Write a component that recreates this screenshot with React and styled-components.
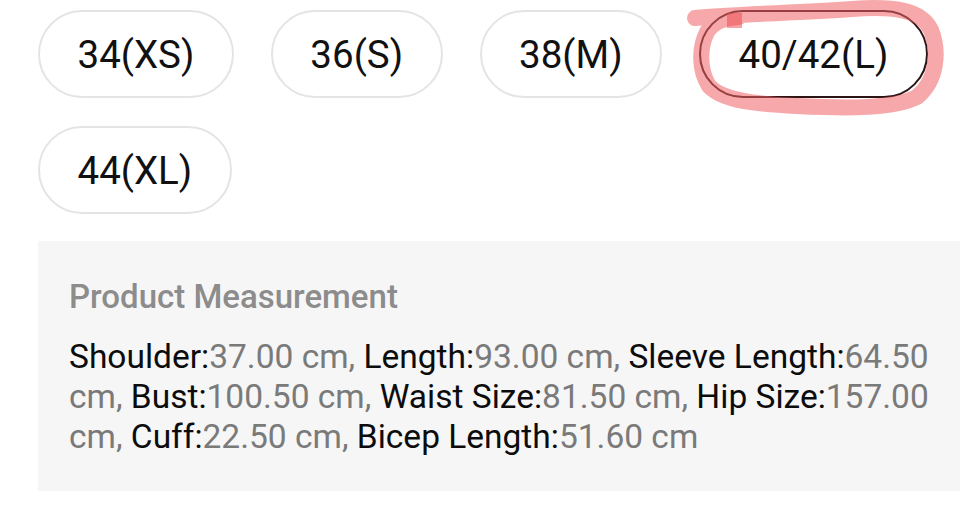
import React from 'react'
import styled, { createGlobalStyle } from 'styled-components'

const sizes = ['34(XS)', '36(S)', '38(M)', '40/42(L)', '44(XL)']
const selectedSize = '40/42(L)'

const measurements = [
	['Shoulder', '37.00 cm'],
	['Length', '93.00 cm'],
	['Sleeve Length', '64.50 cm'],
	['Bust', '100.50 cm'],
	['Waist Size', '81.50 cm'],
	['Hip Size', '157.00 cm'],
	['Cuff', '22.50 cm'],
	['Bicep Length', '51.60 cm'],
]

const GlobalStyle = createGlobalStyle`
	body {
		margin: 0;
		background: #ffffff;
		font-family: Roboto, "Noto Sans", Arial, sans-serif;
	}
`

export default function App() {
	return (
		<Page>
			<GlobalStyle />
			<SizeGrid>
				{sizes.map((s) => (
					<ChipWrap key={s}>
						<SizeChip selected={s === selectedSize}>{s}</SizeChip>
						{s === selectedSize && <Scribble />}
					</ChipWrap>
				))}
			</SizeGrid>
			<MeasureBox>
				<MeasureTitle>Product Measurement</MeasureTitle>
				<MeasureText>
					{measurements.map(([label, value], i) => (
						<React.Fragment key={label}>
							<Label>{label}:</Label>
							<Value>{value}{i < measurements.length - 1 ? ', ' : ''}</Value>
						</React.Fragment>
					))}
				</MeasureText>
			</MeasureBox>
		</Page>
	)
}

// hand drawn red loop round the picked size
const Scribble = () => (
	<ScribbleSvg viewBox="0 0 280 125" width="280" height="125">
		<path
			d="M18 18 C 60 14, 120 13, 175 9 C 215 6, 244 9, 254 30 C 262 50, 261 80, 240 97 C 215 110, 160 108, 120 106 C 80 104, 46 101, 32 86 C 22 70, 22 48, 30 32 C 36 22, 46 18, 62 17"
			fill="none"
			stroke="rgba(238, 96, 100, 0.55)"
			strokeWidth="16"
			strokeLinecap="round"
			strokeLinejoin="round"
		/>
		<rect x="50" y="13" width="15" height="15" fill="rgba(238, 70, 76, 0.5)" />
	</ScribbleSvg>
)

const Page = styled.div`
	width: 960px;
	height: 505px;
	overflow: hidden;
	padding: 10px 0 0 38px;
	box-sizing: border-box;
	background: #fff;
`

const SizeGrid = styled.div`
	display: flex;
	flex-wrap: wrap;
	column-gap: 37px;
	row-gap: 28px;
	width: 922px;
`

const ChipWrap = styled.div`
	position: relative;
`

const SizeChip = styled.div`
	height: 88px;
	box-sizing: border-box;
	padding: 0 37.5px;
	display: flex;
	align-items: center;
	border-radius: 44px;
	border: 2px solid ${(p) => (p.selected ? '#2b1414' : '#e4e4e4')};
	font-size: 38.5px;
	color: #111;
	background: #fff;
`

const ScribbleSvg = styled.svg`
	position: absolute;
	left: -22px;
	top: -10px;
	pointer-events: none;
`

const MeasureBox = styled.div`
	margin-top: 27px;
	background: #f6f6f6;
	padding: 36px 20px 33px 31px;
	height: 250px;
	box-sizing: border-box;
`

const MeasureTitle = styled.div`
	font-size: 33px;
	font-weight: 500;
	line-height: 40px;
	color: #8c8c8c;
	margin-bottom: 20px;
`

const MeasureText = styled.p`
	margin: 0;
	font-size: 33.5px;
	line-height: 40px;
	width: 872px;
`

const Label = styled.span`
	color: #0c0c0c;
`

const Value = styled.span`
	color: #7a7a7a;
`
